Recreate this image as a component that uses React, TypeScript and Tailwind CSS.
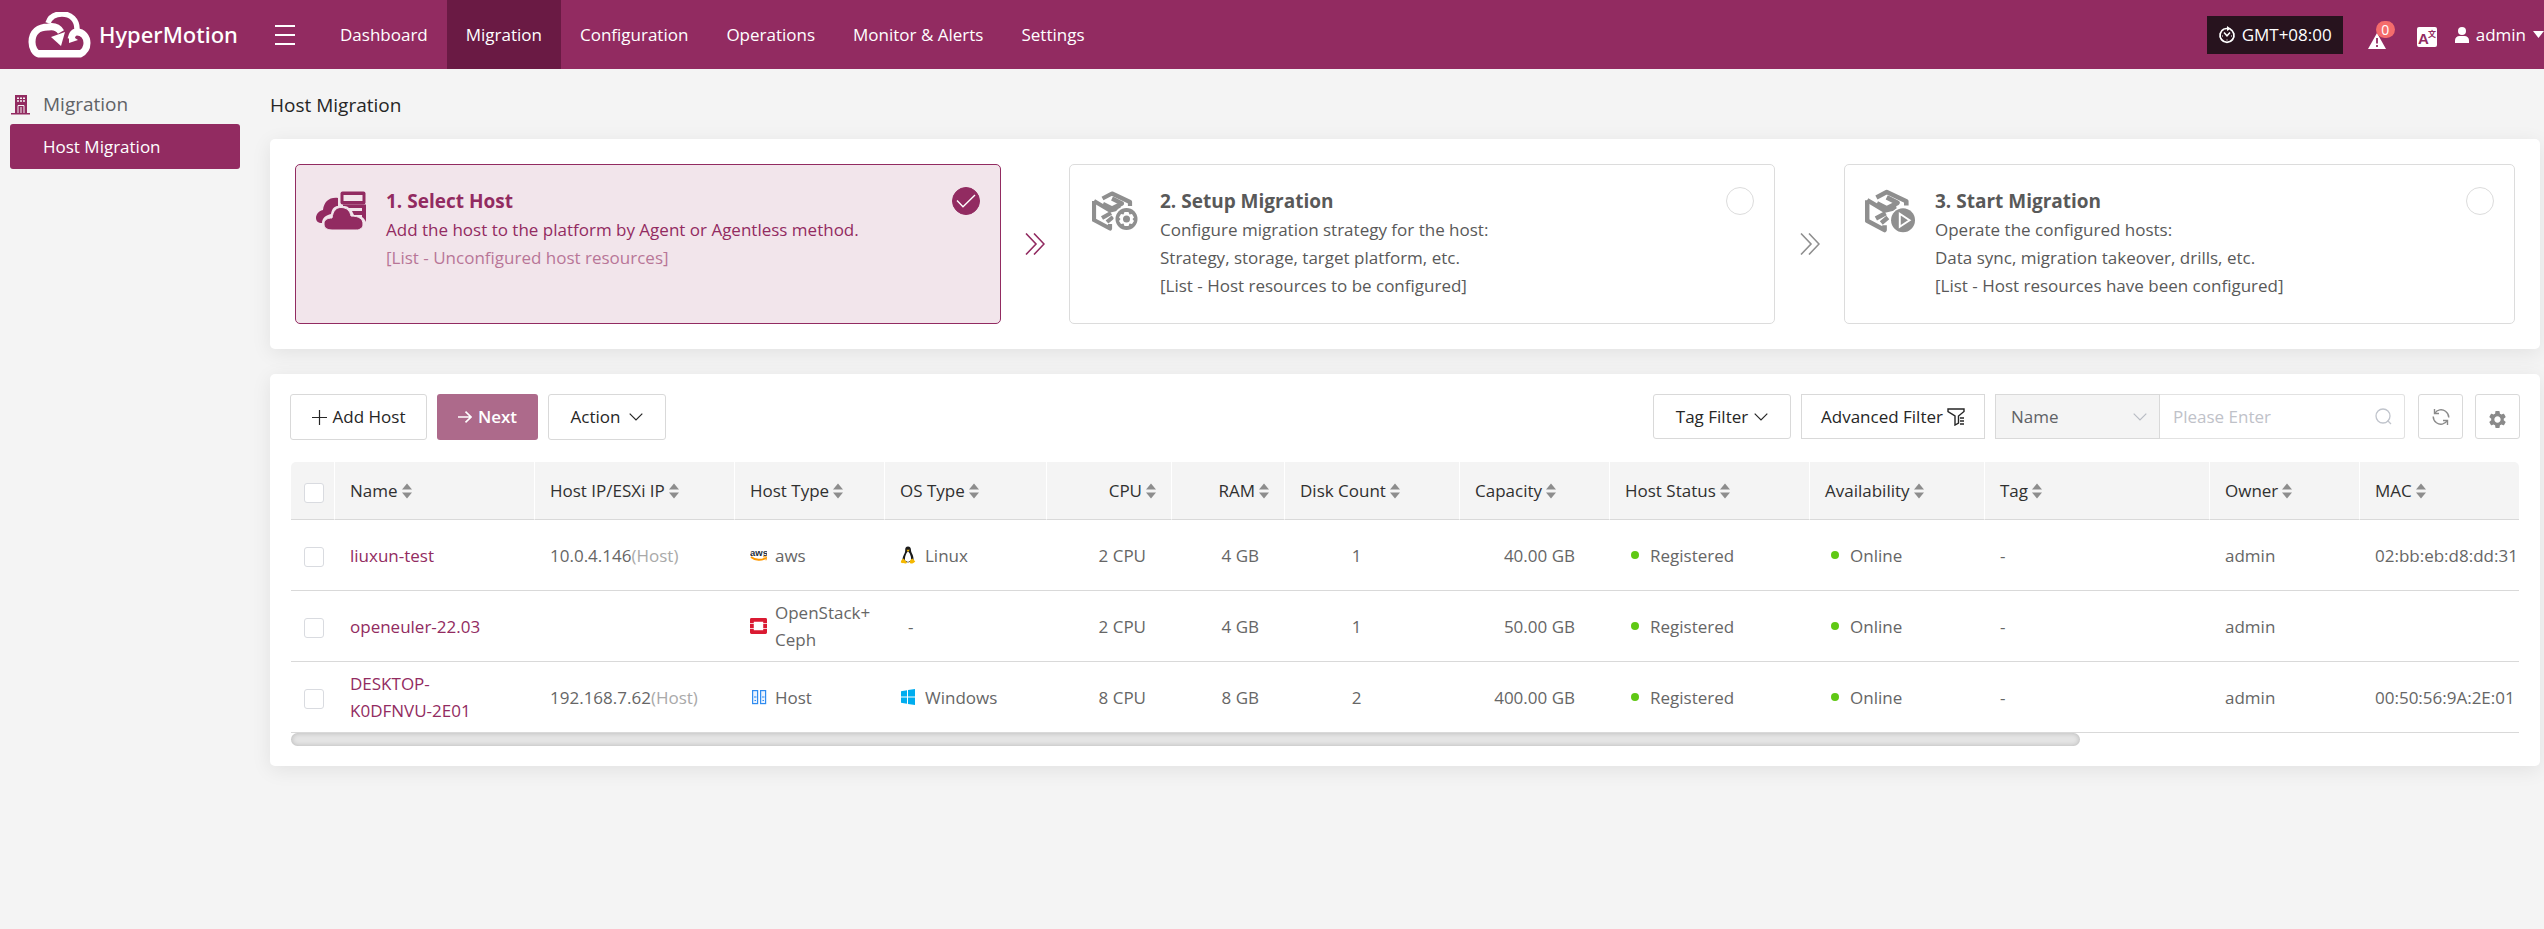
import type { ReactNode } from "react";
import { MdSettings } from "react-icons/md";

const NAV = ["Dashboard", "Migration", "Configuration", "Operations", "Monitor & Alerts", "Settings"];

function Logo() {
  return (
    <svg className="h-[46px] w-[63px] shrink-0" viewBox="0 0 63 46" fill="none" aria-hidden="true">
      <path d="M20 11C22 5 27 2 34 2C43 2 49 8 49 17" stroke="#fff" strokeWidth="5.5" />
      <path
        d="M33 20C30 15 25 14 20 15C11 15 4 20 4 30C4 36 7 41 11 42H52C56 40 59 36 59 31C59 25 55 20 49 20C45 20 44 23 43 27"
        stroke="#fff"
        strokeWidth="7"
      />
      <path d="M9 38H54V45H11Z" fill="#fff" />
      <path d="M23 25L37 20L33 34Z" fill="#fff" />
      <path d="M41 31L41 22L50 28Z" fill="#fff" />
    </svg>
  );
}

function StopwatchIcon() {
  return (
    <svg className="size-[18px]" viewBox="0 0 18 18" fill="none" stroke="#fff" aria-hidden="true">
      <path d="M12 3A7 7 0 1 1 6 3" strokeWidth="1.8" />
      <path d="M9 0L13 2.8L9 5Z" fill="#fff" stroke="none" />
      <path d="M6 3.2C7 2.6 8 2.4 10 2.6" strokeWidth="1.5" />
      <path d="M6 6.5L9 9.8L12 6.5" strokeWidth="1.5" />
      <path d="M4 10H5M13 10H14M9 13.5V14.5" strokeWidth="1" />
    </svg>
  );
}

function AlertIcon() {
  return (
    <svg className="h-4 w-[18px]" viewBox="0 0 18 16" aria-hidden="true">
      <path d="M9 0L18 16H0Z" fill="#fff" />
      <path d="M9 5V10.5M9 12V14" stroke="#922b61" strokeWidth="1.8" />
    </svg>
  );
}

function TranslateIcon() {
  return (
    <svg className="size-5" viewBox="0 0 20 20" aria-hidden="true">
      <rect width="20" height="20" rx="2" fill="#fff" />
      <text x="1" y="17" fontSize="15" fontWeight="700" fill="#922b61" fontFamily="Liberation Sans, sans-serif">A</text>
      <text x="11" y="10" fontSize="8" fontWeight="700" fill="#922b61" fontFamily="Noto Sans CJK SC, sans-serif">文</text>
    </svg>
  );
}

function UserIcon() {
  return (
    <svg className="h-4 w-[14px]" viewBox="0 0 14 16" fill="#fff" aria-hidden="true">
      <circle cx="7" cy="4" r="4" />
      <path d="M0 16V13.500C0 10.500 2 9 4.500 9H9.500C12 9 14 10.500 14 13.500V16Z" />
    </svg>
  );
}

function BuildingIcon() {
  return (
    <svg className="h-5 w-[20px]" viewBox="0 0 20 20" aria-hidden="true">
      <path d="M4 0H16V18H19V19.500H0V18H4Z" fill="#922b61" />
      <path
        d="M6 3.300H8M9 3.300H11M12 3.300H14M6 6H8M9 6H11M12 6H14"
        stroke="#f4f4f4"
        strokeWidth="1.500"
      />
      <path d="M7 18V10.500H13V18M10 12V18" stroke="#f4f4f4" strokeWidth="1" fill="none" />
    </svg>
  );
}

function CloudHostIcon() {
  return (
    <svg className="h-10 w-[50px]" viewBox="0 0 50 40" aria-hidden="true">
      <path d="M22 7C13 6 8 11 7 19C2 20 0 24 0 27C0 30 2 32 6 32C6 27 10 24 15 23C16 17 19 15 22 15Z" fill="#922b61" />
      <rect x="24.500" y="0.500" width="25" height="13" rx="2" fill="#922b61" />
      <rect x="27.500" y="4" width="19" height="6" fill="#f2e5eb" />
      <path d="M27 13.500H50V31C49 29 48 27 46 26V24H38L36 20H46V17H33C31 15 29 15 27 15Z" fill="#922b61" />
      <path d="M16 39C10 39 8 36 8 33C8 29 11 27 16 27C17 20 20 16.500 25 16.500C31 16.500 34 20 35 25C43 25 47 28 47 33C47 37 44 39 40 39Z" fill="#922b61" stroke="#f2e5eb" strokeWidth="1" />
    </svg>
  );
}

function Cube() {
  return (
    <g fill="none" stroke="#8f8f8f" strokeWidth="4.200" strokeLinejoin="round">
      <path d="M10.500 7.500L20 2.500L38 11V15" />
      <path d="M20 7.500L30 12.500L20 17.500L11 13" />
      <path d="M2 10V29L18 37.500V33" />
      <path d="M2 10L18 19.500L29 17" />
      <path d="M10 27L19 22M15 31L21 26" />
    </g>
  );
}

function CubeGearIcon() {
  return (
    <svg className="h-10 w-[46px]" viewBox="0 0 46 40" aria-hidden="true">
      <Cube />
      <circle cx="34.500" cy="28" r="13" fill="#fff" />
      <circle cx="34.500" cy="28" r="11" fill="#8f8f8f" />
      <path
        d="M32.500 21H36.500L37.500 23.500L40 23L42 26.500L40.500 28L42 30L40 33L37.500 32.500L36.500 35H32.500L31.500 32.500L29 33L27 30L28.500 28L27 26.500L29 23L31.500 23.500Z"
        fill="#fff"
      />
      <circle cx="34.500" cy="28" r="3.500" fill="#8f8f8f" />
    </svg>
  );
}

function CubePlayIcon() {
  return (
    <svg className="h-11 w-[50px]" viewBox="0 0 46 40" aria-hidden="true">
      <Cube />
      <circle cx="35" cy="28.500" r="12.500" fill="#fff" />
      <circle cx="35" cy="28.500" r="11" fill="#8f8f8f" />
      <path d="M32 22.500L41 28.500L32 34.500Z" stroke="#fff" strokeWidth="1.800" fill="none" />
    </svg>
  );
}

function DoubleArrow({ color }: { color: string }) {
  return (
    <svg className={`h-[22px] w-5 ${color}`} viewBox="0 0 20 22" fill="none" stroke="currentColor" strokeWidth="1.600" aria-hidden="true">
      <path d="M1 0.500L11 11L1 21.500M9 0.500L19 11L9 21.500" />
    </svg>
  );
}

function Chevron({ className }: { className: string }) {
  return (
    <svg className={className} viewBox="0 0 14 8" fill="none" stroke="currentColor" strokeWidth="1.200" aria-hidden="true">
      <path d="M0.700 0.700L7 7L13.300 0.700" />
    </svg>
  );
}

function SortIcon() {
  return (
    <svg className="h-4 w-[10px] shrink-0" viewBox="0 0 10 16" fill="#8d8d8d" aria-hidden="true">
      <path d="M5 0.500L10 6.500H0ZM5 15.500L0 9.500H10Z" />
    </svg>
  );
}

function AwsIcon() {
  return (
    <svg className="h-[14px] w-[17px]" viewBox="0 0 17 14" aria-hidden="true">
      <text x="0" y="7.500" fontSize="9.500" fontWeight="700" fill="#252f3e" fontFamily="Liberation Sans, sans-serif">aws</text>
      <path d="M1 9C5 12.500 12 12.500 16 10" stroke="#f90" strokeWidth="1.800" fill="none" />
      <path d="M13 8.800L16.500 8.800L16 12.300" stroke="#f90" strokeWidth="1" fill="none" />
    </svg>
  );
}

function OpenStackIcon() {
  return (
    <svg className="h-[18px] w-[17px]" viewBox="0 0 18 18" aria-hidden="true">
      <path d="M0 2Q0 0.500 1.500 0.500H16.500Q18 0.500 18 2V6H14V4.500H4V6H0ZM0 7H4V11H0ZM14 7H18V11H14ZM0 12H4V13.500H14V12H18V16Q18 17.500 16.500 17.500H1.500Q0 17.500 0 16Z" fill="#da1a32" />
    </svg>
  );
}

function HostIcon() {
  return (
    <svg className="h-4 w-[17px]" viewBox="0 0 17 16" fill="#eaf3ff" stroke="#2f8cf0" strokeWidth="1.200" aria-hidden="true">
      <rect x="2.600" y="1.600" width="5" height="13" />
      <rect x="10.600" y="1.600" width="5" height="13" />
      <path d="M4 8H6.500M12 8H14.500M4.500 11.500H6M12.500 11.500H14" />
    </svg>
  );
}

function LinuxIcon() {
  return (
    <svg className="h-[18px] w-4" viewBox="0 0 16 18" aria-hidden="true">
      <path d="M8 0.500C10 0.500 11 2 11 4.500C11.200 7 14 9.500 13.500 14.500L8 16.500L2.500 14.500C2.500 9.500 5.300 7.500 5.200 4.500C5 2 6 0.500 8 0.500Z" fill="#1a1a1a" />
      <path d="M8 5.500C9.500 6.500 11.500 10 11 14.500L8 16L5 14.500C4.500 10.500 6.500 6.500 8 5.500Z" fill="#fff" />
      <path d="M6.500 3.800H9.700L8 6Z" fill="#f5b800" />
      <path d="M3.500 12.500L7 16.500C6.500 18 4 17.500 0.800 16.500C1 14.500 2 13 3.500 12.500ZM12.500 12.500L15.300 15.500C13.500 17.500 10.500 18.500 9.700 16.500C9.700 14.500 11 13 12.500 12.500Z" fill="#f5b800" />
    </svg>
  );
}

function WindowsIcon() {
  return (
    <svg className="h-[18px] w-4" viewBox="0 0 16 18" fill="#00adef" aria-hidden="true">
      <path d="M1 3.300L7 2.300V8.500H1ZM8 2.100L15 1V8.500H8ZM1 9.500H7V15.700L1 14.700ZM8 9.500H15V17L8 15.900Z" />
    </svg>
  );
}

const STEPS = [
  {
    title: "1. Select Host",
    lines: ["Add the host to the platform by Agent or Agentless method."],
    list: "[List - Unconfigured host resources]",
    icon: <CloudHostIcon />,
    active: true,
  },
  {
    title: "2. Setup Migration",
    lines: ["Configure migration strategy for the host:", "Strategy, storage, target platform, etc."],
    list: "[List - Host resources to be configured]",
    icon: <CubeGearIcon />,
    active: false,
  },
  {
    title: "3. Start Migration",
    lines: ["Operate the configured hosts:", "Data sync, migration takeover, drills, etc."],
    list: "[List - Host resources have been configured]",
    icon: <CubePlayIcon />,
    active: false,
  },
];

function StepCard({ step }: { step: (typeof STEPS)[number] }) {
  return (
    <label
      className={`flex min-h-40 items-start gap-5 rounded-[5px] border px-5 pt-[22px] ${
        step.active ? "border-[#922b61] bg-[#f2e5eb] text-[#922b61]" : "border-[#dcdcdc] bg-white text-[#595959]"
      }`}
    >
      <span className="flex h-12 w-[50px] shrink-0 items-center justify-center">{step.icon}</span>
      <span className="flex min-w-0 flex-1 flex-col text-[17px] leading-7">
        <span className="text-[19px] leading-[29px] font-bold">{step.title}</span>
        {step.lines.map((line) => (
          <span key={line}>{line}</span>
        ))}
        <span className={step.active ? "opacity-60" : ""}>{step.list}</span>
      </span>
      <span className="grid shrink-0 place-items-center">
        <input
          type="radio"
          name="step"
          defaultChecked={step.active}
          className="col-start-1 row-start-1 size-7 appearance-none rounded-full border border-[#dcdcdc] bg-white checked:border-[#922b61] checked:bg-[#922b61]"
        />
        {step.active && (
          <svg className="col-start-1 row-start-1 h-[14px] w-5" viewBox="0 0 20 14" fill="none" stroke="#fff" strokeWidth="1.400" aria-hidden="true">
            <path d="M1 6.500L7 12.700L19 1" />
          </svg>
        )}
      </span>
    </label>
  );
}

const COLUMNS = [
  { label: "Name", width: "w-[200px]", right: false },
  { label: "Host IP/ESXi IP", width: "w-[200px]", right: false },
  { label: "Host Type", width: "w-[150px]", right: false },
  { label: "OS Type", width: "w-[162px]", right: false },
  { label: "CPU", width: "w-[125px]", right: true },
  { label: "RAM", width: "w-[113px]", right: true },
  { label: "Disk Count", width: "w-[175px]", right: false },
  { label: "Capacity", width: "w-[150px]", right: false },
  { label: "Host Status", width: "w-[200px]", right: false },
  { label: "Availability", width: "w-[175px]", right: false },
  { label: "Tag", width: "w-[225px]", right: false },
  { label: "Owner", width: "w-[150px]", right: false },
  { label: "MAC", width: "w-auto", right: false },
];

const HOSTS = [
  {
    name: "liuxun-test", ip: "10.0.4.146", type: "aws", typeIcon: <AwsIcon />, os: "Linux", osIcon: <LinuxIcon />,
    cpu: "2 CPU", ram: "4 GB", disks: "1", capacity: "40.00 GB", mac: "02:bb:eb:d8:dd:31",
  },
  {
    name: "openeuler-22.03", ip: "", type: "OpenStack+ Ceph", typeIcon: <OpenStackIcon />, os: "-", osIcon: null,
    cpu: "2 CPU", ram: "4 GB", disks: "1", capacity: "50.00 GB", mac: "",
  },
  {
    name: "DESKTOP-K0DFNVU-2E01", ip: "192.168.7.62", type: "Host", typeIcon: <HostIcon />, os: "Windows", osIcon: <WindowsIcon />,
    cpu: "8 CPU", ram: "8 GB", disks: "2", capacity: "400.00 GB", mac: "00:50:56:9A:2E:01",
  },
];

function Checkbox({ label }: { label: string }) {
  return (
    <input
      type="checkbox"
      aria-label={label}
      className="mt-1 block size-5 appearance-none rounded-[3px] border border-[#d9dbe0] bg-white checked:bg-[#922b61]"
    />
  );
}

function Status({ children }: { children: ReactNode }) {
  return (
    <span className="flex items-center gap-[11px] pl-1.5">
      <span className="size-2 rounded-full bg-[#5fc814]" />
      {children}
    </span>
  );
}

function HostTable() {
  return (
    <div className="overflow-hidden px-px">
      <table className="w-full table-fixed border-separate border-spacing-0 text-left text-[17px] leading-[27px] text-[#666]">
        <thead>
          <tr className="h-[58px] text-[#303030]">
            <th className="w-11 rounded-tl-[5px] border-r border-b border-r-white border-b-[#d9d9d9] bg-[#f4f4f4] pl-[13px]">
              <Checkbox label="Select all hosts" />
            </th>
            {COLUMNS.map((col) => (
              <th
                key={col.label}
                className={`border-b border-b-[#d9d9d9] bg-[#f4f4f4] px-[15px] font-normal not-last:border-r not-last:border-r-white last:rounded-tr-[5px] ${col.width}`}
              >
                <button type="button" className={`flex w-full items-center gap-1 whitespace-nowrap ${col.right ? "justify-end" : ""}`}>
                  {col.label}
                  <SortIcon />
                </button>
              </th>
            ))}
          </tr>
        </thead>
        <tbody>
          {HOSTS.map((host) => (
            <tr key={host.name} className="h-[71px] [&>td]:border-b [&>td]:border-[#d9d9d9]">
              <td className="pl-[13px]"><Checkbox label={`Select ${host.name}`} /></td>
              <td className="pr-10 pl-[15px]">
                <a href="#host" className="text-[#922b61]">{host.name}</a>
              </td>
              <td className="px-[15px]">
                {host.ip}
                {host.ip && <span className="text-[#a9a9a9]">(Host)</span>}
              </td>
              <td className="pl-[15px]">
                <span className="flex items-center gap-2">
                  <span className="shrink-0">{host.typeIcon}</span>
                  <span>{host.type}</span>
                </span>
              </td>
              <td className="px-[15px]">
                <span className="flex items-center gap-[9px]">
                  {host.osIcon}
                  <span className={host.osIcon ? "" : "pl-2"}>{host.os}</span>
                </span>
              </td>
              <td className="pr-[26px] text-right">{host.cpu}</td>
              <td className="pr-[26px] text-right">{host.ram}</td>
              <td className="pr-8 text-center">{host.disks}</td>
              <td className="pr-[35px] text-right">{host.capacity}</td>
              <td className="px-[15px]"><Status>Registered</Status></td>
              <td className="px-[15px]"><Status>Online</Status></td>
              <td className="px-[15px]">-</td>
              <td className="px-[15px]">admin</td>
              <td className="pl-[15px] whitespace-nowrap">{host.mac}</td>
            </tr>
          ))}
        </tbody>
      </table>
      <div className="h-[13px] w-[80.3%] rounded-full bg-[#e4e4e4] shadow-[inset_0_0_5px_rgba(0,0,0,0.2)]" />
    </div>
  );
}

function Toolbar() {
  return (
    <div className="flex items-start justify-between text-[17px] text-[#262626]">
      <div className="flex gap-[10px]">
        <button type="button" className="flex h-[46px] w-[137px] items-center justify-center gap-1.5 rounded-[3px] border border-[#d9d9d9] font-medium">
          <svg className="size-[15px]" viewBox="0 0 15 15" stroke="currentColor" strokeWidth="1.200" aria-hidden="true">
            <path d="M7.500 0V15M0 7.500H15" />
          </svg>
          Add Host
        </button>
        <button type="button" className="flex h-[46px] w-[101px] items-center justify-center gap-1.5 rounded-[3px] bg-[#ad6a8b] font-semibold text-white">
          <svg className="h-3 w-[14px]" viewBox="0 0 14 12" fill="none" stroke="currentColor" strokeWidth="1.600" aria-hidden="true">
            <path d="M0 6H13M7.500 0.700L13 6L7.500 11.300" />
          </svg>
          Next
        </button>
        <button type="button" className="flex h-[46px] w-[118px] items-center justify-center gap-[9px] rounded-[3px] border border-[#d9d9d9] font-medium">
          Action
          <Chevron className="h-2 w-[14px]" />
        </button>
      </div>
      <div className="flex">
        <button type="button" className="mr-[10px] flex h-[45px] w-[138px] items-center justify-center gap-1.5 rounded-[3px] border border-[#d9d9d9] font-medium">
          Tag Filter
          <Chevron className="h-2 w-[14px]" />
        </button>
        <button type="button" className="mr-[10px] flex h-[45px] w-[184px] items-center justify-center gap-1 border border-[#d9d9d9]">
          Advanced Filter
          <svg className="h-[18px] w-[18px]" viewBox="0 0 18 18" fill="none" stroke="currentColor" strokeWidth="1.400" aria-hidden="true">
            <path d="M1 1H17V3.500L11.500 8V15L8 17V8L1 3.500V1Z" />
            <path d="M13 10H17M13 13H17M13 16H17" />
          </svg>
        </button>
        <div className="flex h-[45px] w-[165px] items-center border border-[#d9d9d9] bg-[#f4f4f4] pr-3 pl-[15px] text-[#606266]">
          <select aria-label="Search field" className="h-full min-w-0 flex-1 appearance-none bg-transparent font-medium outline-none">
            <option>Name</option>
          </select>
          <Chevron className="h-2 w-[14px] text-[#b8bcc4]" />
        </div>
        <div className="mr-[13px] flex h-[45px] w-[245px] items-center rounded-r-[3px] border border-l-0 border-[#e2e2e2] pr-3 pl-[13px]">
          <input
            type="text"
            aria-label="Search value"
            placeholder="Please Enter"
            className="h-full min-w-0 flex-1 outline-none placeholder:text-[#bfc2c9]"
          />
          <svg className="size-[17px] text-[#c0c4cc]" viewBox="0 0 17 17" fill="none" stroke="currentColor" strokeWidth="1.300" aria-hidden="true">
            <circle cx="8" cy="8" r="7" />
            <path d="M12.500 12.500L16 16" />
          </svg>
        </div>
        <button type="button" aria-label="Refresh" className="mr-3 flex h-[45px] w-[45px] items-center justify-center rounded-[3px] border border-[#d9d9d9] text-[#8a8a8a]">
          <svg className="size-[18px]" viewBox="0 0 18 18" fill="none" stroke="currentColor" strokeWidth="1.400" aria-hidden="true">
            <path d="M2.500 1V5.500H7" />
            <path d="M2.800 5.300C5 1.500 10 0.700 13.500 3.200C15.500 4.700 16.800 7 16.800 9.500" />
            <path d="M15.500 17V12.500H11" />
            <path d="M15.200 12.700C13 16.500 8 17.300 4.500 14.800C2.500 13.300 1.200 11 1.200 8.500" />
          </svg>
        </button>
        <button type="button" aria-label="Table settings" className="flex h-[45px] w-[45px] items-center justify-center rounded-[3px] border border-[#d9d9d9] pt-1.5 text-[#8a8a8a]">
          <MdSettings className="size-[21px]" />
        </button>
      </div>
    </div>
  );
}

function Header() {
  return (
    <header className="flex h-[69px] items-stretch bg-[#922b61] text-[17px] text-white">
      <div className="flex w-[321px] shrink-0 items-center pl-7">
        <Logo />
        <span className="ml-2 font-['Noto_Sans',sans-serif] text-[22px] font-medium">HyperMotion</span>
        <button type="button" aria-label="Toggle menu" className="ml-auto pr-[26px]">
          <svg className="h-5 w-5" viewBox="0 0 20 20" stroke="#fff" strokeWidth="2" aria-hidden="true">
            <path d="M0 1H20M0 10H20M0 19H20" />
          </svg>
        </button>
      </div>
      <nav className="flex">
        {NAV.map((item) => (
          <a key={item} href="#nav" className={`flex items-center px-[19px] ${item === "Migration" ? "bg-[#6a1a44]" : ""}`}>
            {item}
          </a>
        ))}
      </nav>
      <div className="ml-auto flex items-center">
        <button type="button" className="mr-[25px] flex h-[38px] w-[136px] items-center justify-center gap-1.5 bg-[#27131e]">
          <StopwatchIcon />
          GMT+08:00
        </button>
        <button type="button" aria-label="Alerts" className="relative mr-[31px] pt-3">
          <AlertIcon />
          <span className="absolute top-0 left-2 flex h-[17px] w-[19px] items-center justify-center rounded-full bg-[#f56c6c] text-[14px]">0</span>
        </button>
        <button type="button" aria-label="Language" className="mr-[18px] pt-1">
          <TranslateIcon />
        </button>
        <button type="button" className="flex items-center gap-[7px]">
          <UserIcon />
          admin
          <svg className="h-[7px] w-[11px]" viewBox="0 0 11 7" fill="#fff" aria-hidden="true">
            <path d="M0 0H11L5.500 7Z" />
          </svg>
        </button>
      </div>
    </header>
  );
}

export default function App() {
  return (
    <div className="min-h-screen bg-[#f4f4f4] font-['Open_Sans','Noto_Sans',sans-serif]">
      <Header />
      <div className="flex">
        <aside className="w-[270px] shrink-0 pt-4 pr-[30px] pl-[10px]">
          <div className="flex h-[39px] items-center gap-3 pl-px text-[19px] text-[#606266]">
            <BuildingIcon />
            Migration
          </div>
          <a href="#host-migration" className="flex h-[45px] items-center rounded-[3px] bg-[#922b61] pl-[33px] text-[17px] text-white">
            Host Migration
          </a>
        </aside>
        <main className="min-w-0 flex-1 pr-1">
          <h1 className="flex h-[70px] items-center pt-[2px] text-[19px] text-[#262626]">Host Migration</h1>
          <section className="grid grid-cols-[706fr_68fr_706fr_69fr_671fr] items-center rounded-[5px] bg-white p-[25px] shadow-[0_4px_20px_rgba(0,0,0,0.08)]">
            <StepCard step={STEPS[0]} />
            <div className="flex justify-center"><DoubleArrow color="text-[#922b61]" /></div>
            <StepCard step={STEPS[1]} />
            <div className="flex justify-center"><DoubleArrow color="text-[#8f8f8f]" /></div>
            <StepCard step={STEPS[2]} />
          </section>
          <section className="mt-[25px] flex flex-col gap-[22px] rounded-[5px] bg-white p-5 shadow-[0_4px_20px_rgba(0,0,0,0.08)]">
            <Toolbar />
            <HostTable />
          </section>
        </main>
      </div>
    </div>
  );
}
